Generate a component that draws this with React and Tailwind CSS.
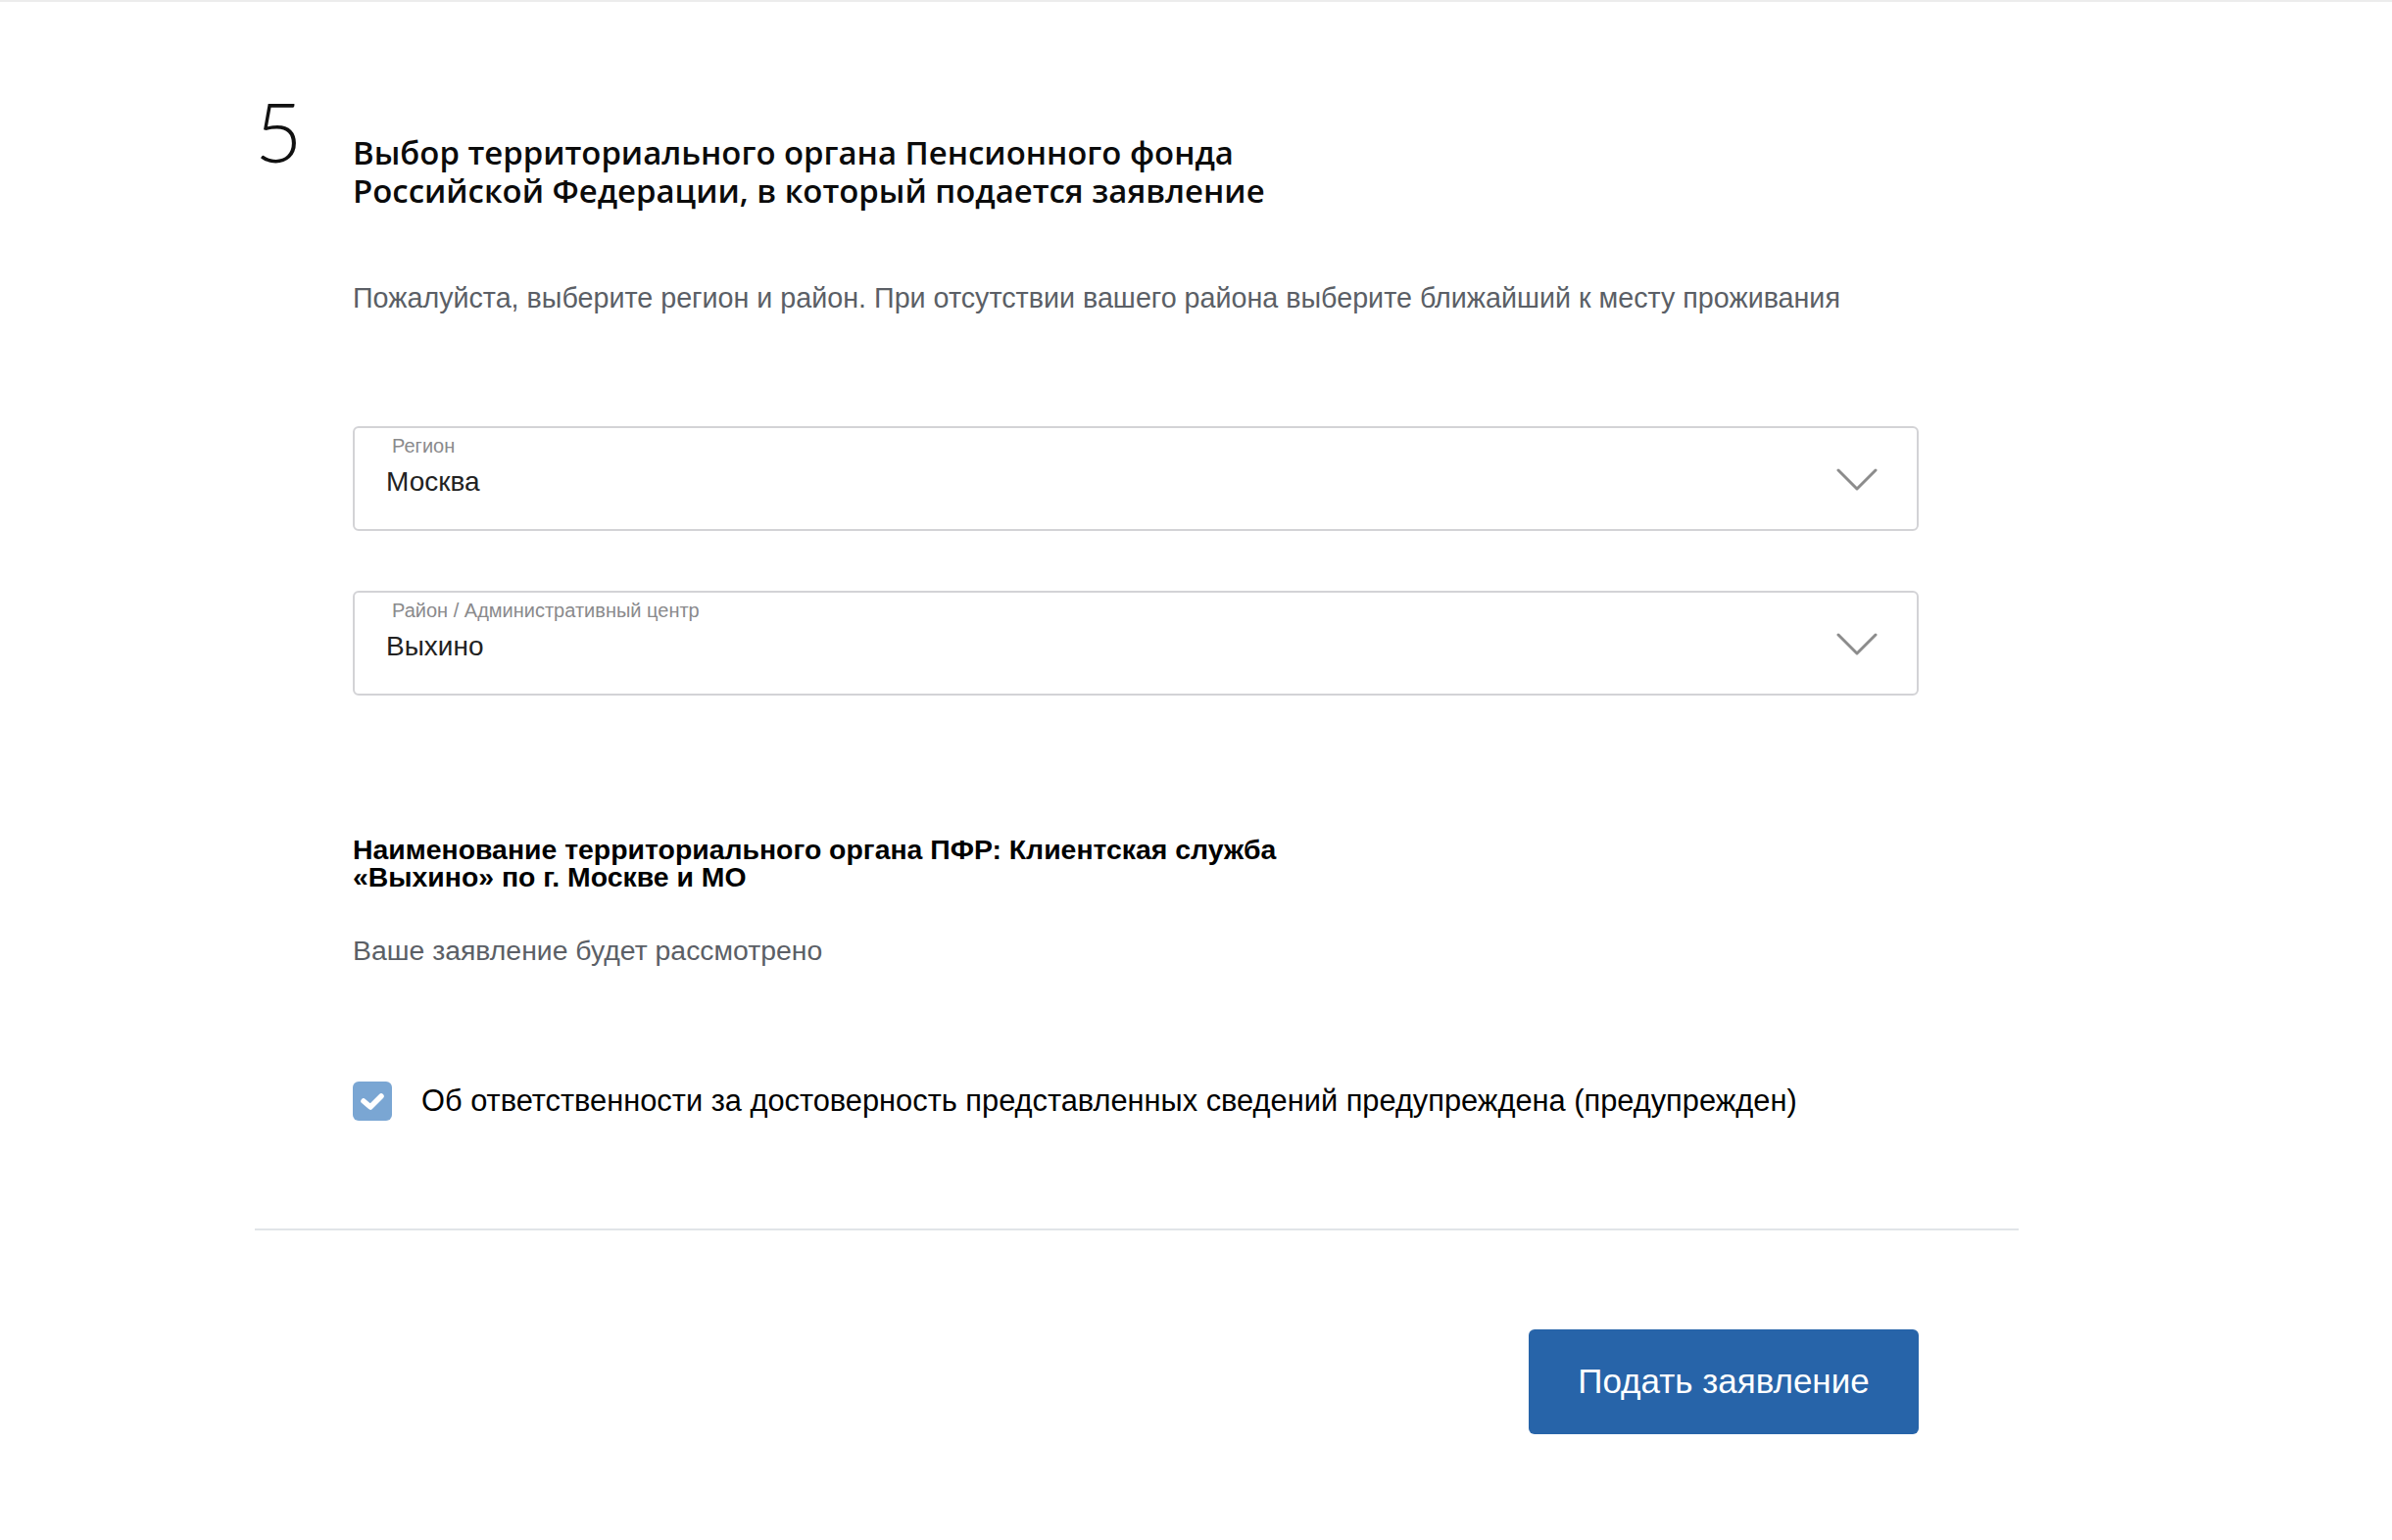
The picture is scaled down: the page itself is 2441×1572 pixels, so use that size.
import React from "react";

function Chevron() {
  return (
    <svg width="42" height="24" viewBox="0 0 42 24" fill="none">
      <path d="M2 2 L21 21 L40 2" stroke="#8c8c8c" strokeWidth="3" strokeLinecap="round" strokeLinejoin="round" />
    </svg>
  );
}

function SelectBox({ label, value }) {
  return (
    <div className="relative h-[107px] w-full rounded-[6px] border-2 border-[#d3d3d6] bg-white">
      <div className="pl-[38px] pt-[4px] text-[20px] leading-[28px] text-[#8a8a8c]">{label}</div>
      <div className="pl-[32px] pt-[6px] text-[28px] leading-[34px] text-[#222]">{value}</div>
      <div className="absolute right-[40px] top-[41px]">
        <Chevron />
      </div>
    </div>
  );
}

export default function App() {
  return (
    <div
      className="min-h-[1572px] w-full border-t-2 border-[#ececec] bg-white"
      style={{ fontFamily: '"Liberation Sans", Arial, sans-serif' }}
    >
      <div className="ml-[260px] w-[1800px]">
        <div className="flex pt-[84px]">
          <div
            className="w-[100px] text-[84px] font-light leading-[96px] text-[#111]"
            style={{ fontFamily: 'Lato, "Open Sans", sans-serif' }}
          >
            5
          </div>
          <h1
            className="mt-[50px] text-[32.9px] font-[540] leading-[39px] text-[#0b0b0b]"
            style={{ fontFamily: '"Open Sans", "Noto Sans", sans-serif' }}
          >
            Выбор территориального органа Пенсионного фонда
            <br />
            Российской Федерации, в который подается заявление
          </h1>
        </div>

        <div className="ml-[100px] w-[1598px]">
          <p className="mt-[73px] text-[28.7px] leading-[34px] text-[#5b5f66]">
            Пожалуйста, выберите регион и район. При отсутствии вашего района выберите ближайший к месту проживания
          </p>

          <div className="mt-[114px] flex flex-col gap-[61px]">
            <SelectBox label="Регион" value="Москва" />
            <SelectBox label="Район / Административный центр" value="Выхино" />
          </div>

          <h2 className="mt-[143px] text-[28.4px] font-bold leading-[28px] text-black">
            Наименование территориального органа ПФР: Клиентская служба
            <br />
            «Выхино» по г. Москве и МО
          </h2>

          <p className="mt-[44px] text-[28.4px] leading-[34px] text-[#5b5f66]">Ваше заявление будет рассмотрено</p>

          <label className="mt-[117px] flex items-center gap-[30px]">
            <span className="flex h-[40px] w-[40px] shrink-0 items-center justify-center rounded-[6px] bg-[#7aa6d3]">
              <svg width="28" height="24" viewBox="0 0 28 24" fill="none">
                <path d="M5 12 L12 18 L23 7" stroke="white" strokeWidth="5.5" strokeLinecap="round" strokeLinejoin="round" />
              </svg>
            </span>
            <span className="text-[30.8px] leading-[34px] text-black">
              Об ответственности за достоверность представленных сведений предупреждена (предупрежден)
            </span>
          </label>
        </div>

        <div className="mt-[110px] h-[2px] w-[1800px] bg-[#e1e4e8]" />

        <div className="ml-[100px] flex w-[1598px] justify-end pt-[101px]">
          <button className="h-[107px] w-[398px] rounded-[6px] bg-[#2764a9] text-[35px] text-white">
            Подать заявление
          </button>
        </div>
      </div>
    </div>
  );
}
